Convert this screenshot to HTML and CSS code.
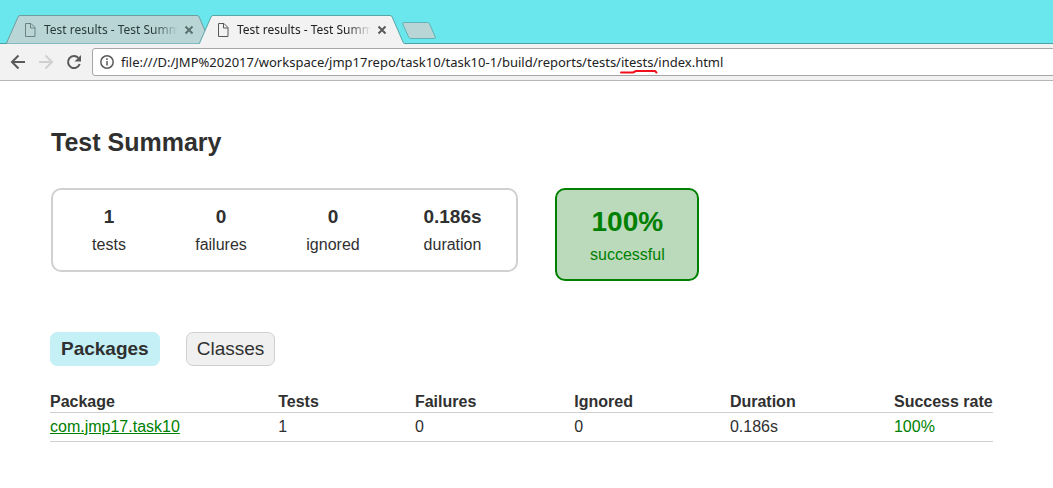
FILE: index.html
```html
<!DOCTYPE html>
<html lang="en">
<head>
<meta charset="utf-8">
<title>Test results - Test Summary</title>
<link rel="stylesheet" href="styles.css">
</head>
<body>
<header class="browser">
  <div class="tabstrip">
    <div class="tab tab-back">
      <svg class="tab-shape" viewBox="0 0 206 29" preserveAspectRatio="none" aria-hidden="true"><path d="M0 28.500 Q.5 28.500 1 27 L12 2 Q12.500 .5 14 .5 H191 Q192.500 .5 193.200 2 L204 27 Q204.500 28.500 206 28.500"/></svg>
      <svg class="page-icon" viewBox="0 0 12 14" aria-hidden="true"><path d="M1.500 .5h5.500l4 4v9H1.500zM6.500 .5v4.500H11"/></svg>
      <span class="tab-title">Test results - Test Summary</span>
      <button class="tab-close" aria-label="Close tab"><svg viewBox="0 0 10 10" aria-hidden="true"><path d="M1.500 1.500l7 7M8.500 1.500l-7 7"/></svg></button>
    </div>
    <div class="tab tab-front">
      <svg class="tab-shape" viewBox="0 0 206 29" preserveAspectRatio="none" aria-hidden="true"><path d="M0 29 Q.5 28.500 1 27 L12 2 Q12.500 .5 14 .5 H191 Q192.500 .5 193.200 2 L204 27 Q204.500 28.500 206 29"/></svg>
      <svg class="page-icon" viewBox="0 0 12 14" aria-hidden="true"><path d="M1.500 .5h5.500l4 4v9H1.500zM6.500 .5v4.500H11"/></svg>
      <span class="tab-title">Test results - Test Summary</span>
      <button class="tab-close" aria-label="Close tab"><svg viewBox="0 0 10 10" aria-hidden="true"><path d="M1.500 1.500l7 7M8.500 1.500l-7 7"/></svg></button>
    </div>
    <button class="new-tab" aria-label="New tab"><svg viewBox="0 0 34 17" aria-hidden="true"><path d="M2 .5H25.500Q27 .5 27.600 2L33.300 15Q33.800 16.500 32 16.500H9Q7.300 16.500 6.600 15L.7 2Q.3 .5 2 .5z"/></svg></button>
  </div>
  <div class="toolbar">
    <button class="nav" aria-label="Back"><svg viewBox="0 0 16 16" aria-hidden="true"><path d="M15 8H2.500M8.500 1.500L2 8l6.500 6.500"/></svg></button>
    <button class="nav nav-off" aria-label="Forward" disabled><svg viewBox="0 0 16 16" aria-hidden="true"><path d="M1 8h12.500M7.500 1.500L14 8l-6.500 6.500"/></svg></button>
    <button class="nav" aria-label="Reload"><svg viewBox="0 0 16 16" aria-hidden="true"><path d="M13.700 10A6 6 0 1 1 12.400 3.900"/><path class="solid" d="M15 1v6.500H8.500z"/></svg></button>
    <div class="address">
      <svg class="info" viewBox="0 0 14 14" aria-hidden="true"><circle cx="7" cy="7" r="6.200"/><path d="M7 6v4.500M7 3.300v1.700"/></svg>
      <input class="url" type="text" aria-label="Address" value="file:///D:/JMP%202017/workspace/jmp17repo/task10/task10-1/build/reports/tests/itests/index.html">
      <svg class="mark" viewBox="0 0 38 5" aria-hidden="true"><path d="M1 3.500H13L16 2H35L36.500 3.500"/></svg>
    </div>
  </div>
</header>
<main class="content">
  <h1 class="title">Test Summary</h1>
  <div class="summary">
    <div class="counters">
      <div><div class="count">1</div><p class="label">tests</p></div>
      <div><div class="count">0</div><p class="label">failures</p></div>
      <div><div class="count">0</div><p class="label">ignored</p></div>
      <div><div class="count">0.186s</div><p class="label">duration</p></div>
    </div>
    <div class="rate">
      <div class="percent">100%</div>
      <p class="label">successful</p>
    </div>
  </div>
  <nav class="views">
    <a class="view view-on" href="#packages">Packages</a>
    <a class="view" href="#classes">Classes</a>
  </nav>
  <table class="results" id="packages">
    <colgroup><col class="c-package"><col class="c-tests"><col class="c-failures"><col class="c-ignored"><col class="c-duration"><col></colgroup>
    <thead>
      <tr><th>Package</th><th>Tests</th><th>Failures</th><th>Ignored</th><th>Duration</th><th>Success rate</th></tr>
    </thead>
    <tbody>
      <tr><td><a class="good" href="#com.jmp17.task10">com.jmp17.task10</a></td><td>1</td><td>0</td><td>0</td><td>0.186s</td><td class="good">100%</td></tr>
    </tbody>
  </table>
</main>
</body>
</html>
```
FILE: styles.css
```css
* { box-sizing: border-box; }
body {
  margin: 0;
  background: #fff;
  color: #303030;
  font: 16px/20px "Liberation Sans", Arial, sans-serif;
}
button { padding: 0; border: 0; background: none; }
svg { display: block; fill: none; }
p { margin: 0; }

.browser { overflow: hidden; font-family: "Noto Sans", "Segoe UI", sans-serif; }
.tabstrip {
  display: flex;
  align-items: flex-end;
  height: 44px;
  padding-left: 6px;
  background: #69e7ed;
  box-shadow: inset 0 -1px #4aa1a6;
}
.tab {
  position: relative;
  display: flex;
  align-items: center;
  width: 206px;
  height: 29px;
  padding: 0 18px;
}
.tab + .tab { margin-left: -13px; }
.tab > * { position: relative; }
.tab > .tab-shape { position: absolute; inset: 0; width: 100%; height: 100%; }
.tab-back .tab-shape { fill: #b9d5d6; stroke: #6f9c9e; }
.tab-front .tab-shape { fill: #f2f2f2; stroke: #5aa5a8; }
.page-icon { flex: none; width: 12px; height: 14px; stroke: #5a5a5a; }
.tab-back .page-icon { stroke: #6c8283; }
.tab-title {
  flex: 1;
  margin: 0 6px 0 8px;
  overflow: hidden;
  white-space: nowrap;
  font-size: 12px;
  line-height: 18px;
  color: #222;
  -webkit-mask-image: linear-gradient(to left, transparent, #000 24px);
  mask-image: linear-gradient(to left, transparent, #000 24px);
}
.tab-back .tab-title { color: #2a3b3c; }
.tab-close svg { width: 10px; height: 10px; stroke: #5a5a5a; stroke-width: 2; }
.tab-back .tab-close svg { stroke: #5b7172; }
.new-tab { margin: 0 0 5px -3px; }
.new-tab svg { width: 34px; height: 17px; fill: #b9d5d6; stroke: #62b3b7; }

.toolbar {
  display: flex;
  align-items: center;
  gap: 12px;
  height: 37px;
  padding-left: 10px;
  background: #f2f2f2;
  border-bottom: 1px solid #b6b6b6;
}
.nav svg { width: 16px; height: 16px; stroke: #5a5a5a; stroke-width: 2; }
.nav-off svg { stroke: #d0d0d0; }
.nav .solid { fill: #5a5a5a; stroke: none; }
.address {
  position: relative;
  flex: 1;
  display: flex;
  align-items: center;
  gap: 7px;
  height: 28px;
  margin: 0 -4px 0 -2px;
  padding-left: 7px;
  background: #fff;
  border: 1px solid #a6a6a6;
  border-radius: 3px;
}
.info { flex: none; width: 14px; height: 14px; stroke: #5a5a5a; stroke-width: 1.5; }
.url {
  flex: 1;
  min-width: 0;
  padding: 0;
  border: 0;
  outline: 0;
  background: none;
  color: #222;
  font: 13px/20px "Noto Sans", "Segoe UI", sans-serif;
}
.mark { position: absolute; left: 527px; top: 20px; width: 38px; height: 5px; stroke: #f00f1c; stroke-width: 2; stroke-linecap: round; }

.content { padding: 46px 60px 46px 50px; }
.title { margin: 0 1px 30px; font-size: 25px; line-height: 31px; }
.summary { display: flex; align-items: flex-start; gap: 37px; margin-left: 1px; text-align: center; }
.counters {
  display: grid;
  grid-template-columns: 112px 112px 112px 127px;
  padding: 15px 0;
  border: 2px solid #d0d0d0;
  border-radius: 10px;
}
.count { margin-bottom: 6px; font-size: 19px; line-height: 24px; font-weight: bold; }
.rate {
  padding: 15px 32px 14px 33px;
  border: 2px solid #008000;
  border-radius: 10px;
  background: #bbd9bb;
  color: #008000;
}
.percent { margin-bottom: 7px; font-size: 28px; line-height: 33px; font-weight: bold; }
.views { display: flex; gap: 26px; margin: 51px 0 24px; }
.view {
  padding: 4px 10px;
  border: 1px solid #d0d0d0;
  border-radius: 7px;
  background: #f0f0f0;
  color: inherit;
  font-size: 19px;
  line-height: 24px;
  text-decoration: none;
}
.view-on { border-color: #c5f0f5; background: #c5f0f5; font-weight: bold; }
.results { width: 100%; border-collapse: collapse; text-align: left; }
.results th, .results td { padding: 0; border-bottom: 1px solid #d0d0d0; white-space: nowrap; }
.results th { padding-top: 2px; }
.results td { padding: 4px 0; }
.c-package { width: 24.2%; }
.c-tests { width: 14.5%; }
.c-failures { width: 16.9%; }
.c-ignored { width: 16.5%; }
.c-duration { width: 17.4%; }
.good { color: #008000; }
```
